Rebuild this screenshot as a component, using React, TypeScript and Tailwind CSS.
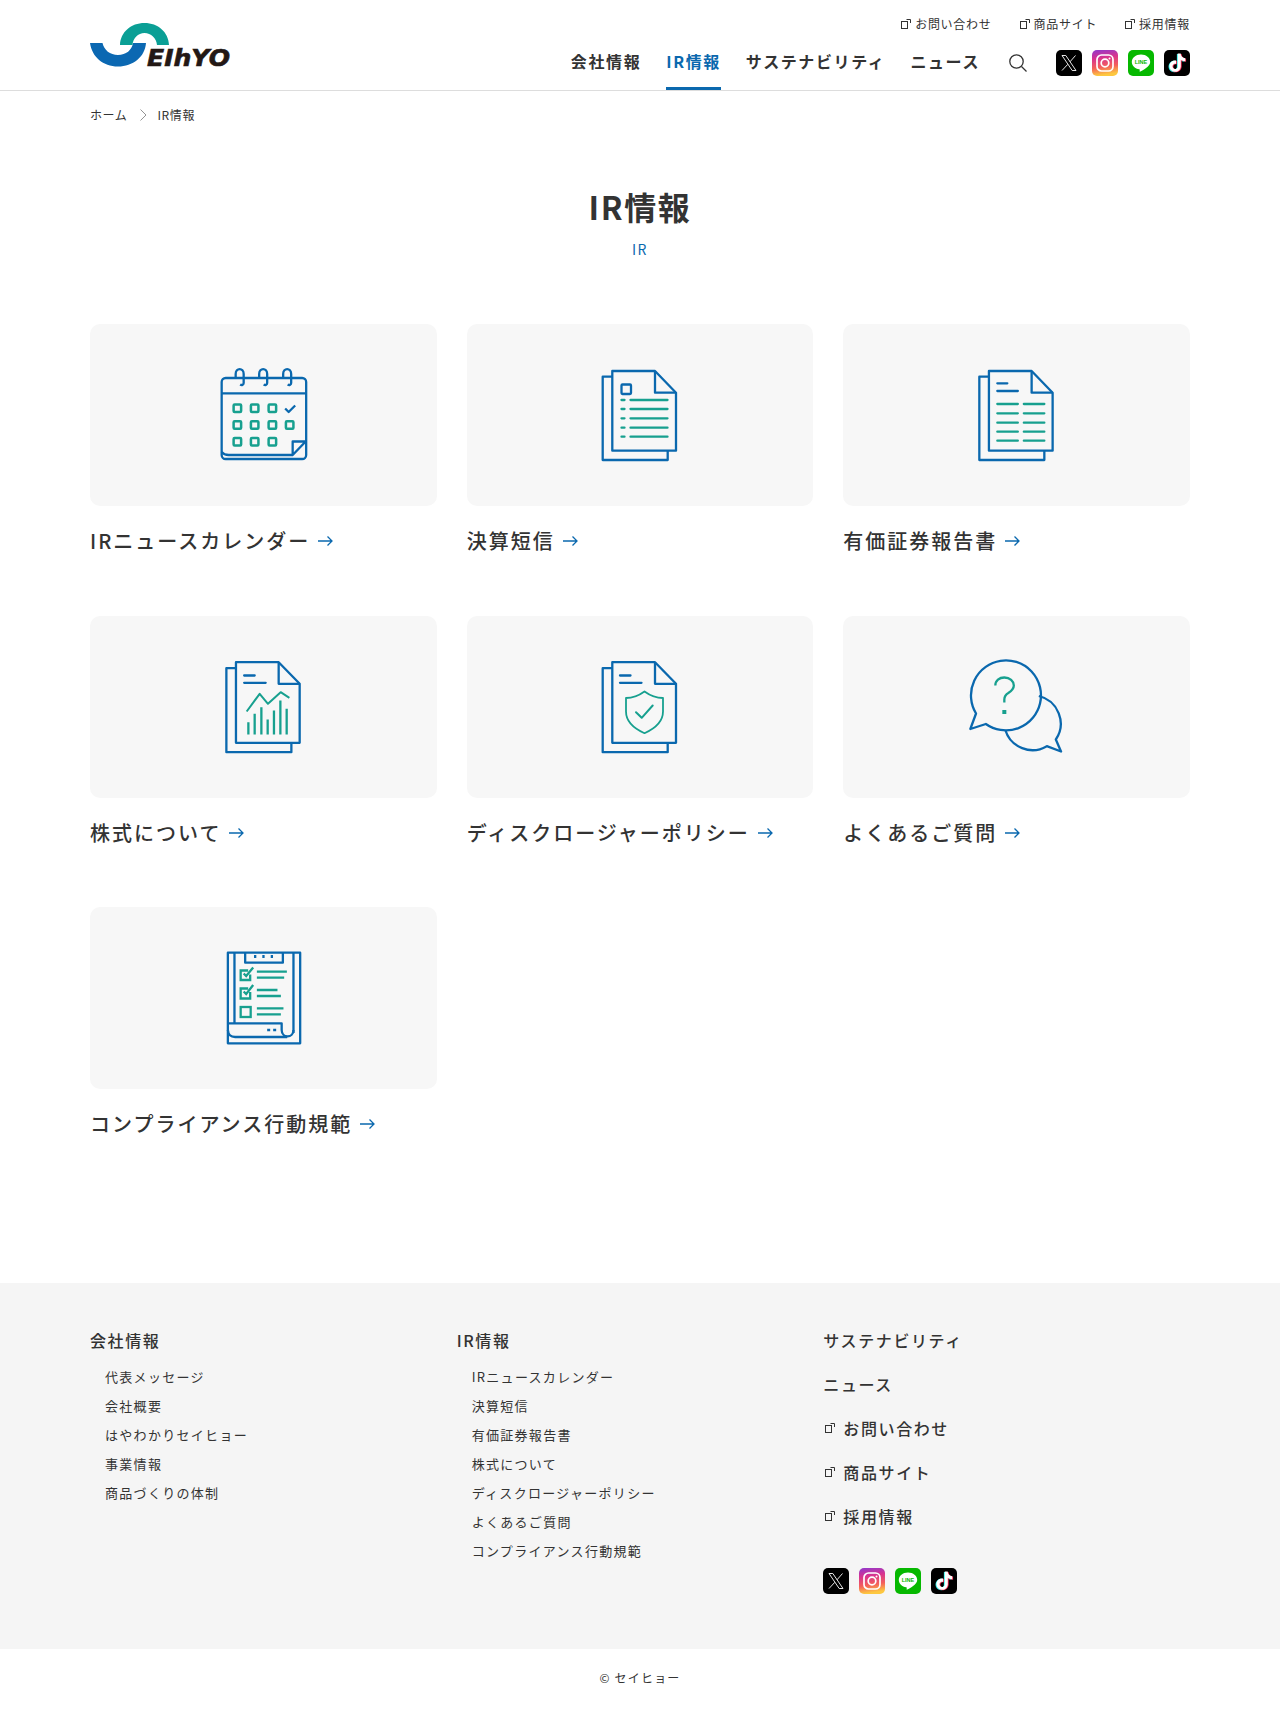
import type { ReactNode } from 'react'

const BLUE = '#0a68ae'
const TEAL = '#17a08f'

const TIKTOK = 'M12.525.02c1.31-.02 2.61-.01 3.91-.02.08 1.53.63 3.09 1.75 4.17 1.12 1.11 2.7 1.62 4.24 1.79v4.03c-1.44-.05-2.89-.35-4.2-.97-.57-.26-1.1-.59-1.62-.93-.01 2.92.01 5.84-.02 8.75-.08 1.4-.54 2.79-1.35 3.94-1.31 1.92-3.58 3.17-5.91 3.21-1.43.08-2.86-.31-4.08-1.03-2.02-1.19-3.44-3.37-3.65-5.71-.02-.5-.03-1-.01-1.49.18-1.9 1.12-3.72 2.58-4.96 1.66-1.44 3.98-2.13 6.15-1.72.02 1.48-.04 2.96-.04 4.44-.99-.32-2.15-.23-3.02.37-.63.41-1.11 1.04-1.36 1.75-.21.51-.15 1.07-.14 1.61.24 1.64 1.82 3.02 3.5 2.87 1.12-.01 2.19-.66 2.77-1.61.19-.33.4-.67.41-1.06.1-1.79.06-3.57.07-5.36.01-4.03-.01-8.05.02-12.07z'

function Logo() {
  return (
    <svg width="144" height="52" viewBox="90 23 144 52" className="block">
      <path d="M90 43H102.500C104 50 110 55 118 55C126 55 132 50 133 43H146C145 57 133 66.500 118 66.500C103 66.500 92 57 90 43Z" fill="#0b68b2" />
      <path d="M120 45C120.500 32 131 23 144.500 23C158 23 168.500 32 169 45H157C156.500 38 151 33 144.500 33C138 33 133 38 132.500 45Z" fill="#0a9f95" />
      <text x="147" y="66" fontFamily="'DejaVu Sans', sans-serif" fontWeight="700" fontStyle="italic" fontSize="23" fill="#231815" stroke="#231815" strokeWidth="0.600" textLength="83" lengthAdjust="spacingAndGlyphs">EIhYO</text>
    </svg>
  )
}

function ExternalIcon({ className }: { className?: string }) {
  return (
    <svg viewBox="0 0 10 10" fill="none" stroke="#333" strokeWidth="1" className={className}>
      <rect x="0.5" y="2.500" width="6" height="7" />
      <path d="M5.500 0.500H9.500V4" />
    </svg>
  )
}

function SocialIcons() {
  return (
    <div className="flex gap-[10px]">
      <svg viewBox="0 0 26 26" className="h-[26px] w-[26px]">
        <rect width="26" height="26" rx="5" fill="#000" />
        <g fill="none" stroke="#fff" strokeWidth="0.900">
          <path d="M6 5.500H9.800L20 20.500H16.200Z" />
          <path d="M19.500 5.500L14 11.800M11.800 14.300L6 20.500" />
        </g>
      </svg>
      <svg viewBox="0 0 26 26" className="h-[26px] w-[26px]">
        <defs>
          <linearGradient id="ig" x1="0" y1="0" x2="0.15" y2="1">
            <stop offset="0" stopColor="#8f39ce" />
            <stop offset="0.35" stopColor="#d8338f" />
            <stop offset="0.7" stopColor="#f4605a" />
            <stop offset="1" stopColor="#fdc83f" />
          </linearGradient>
        </defs>
        <rect width="26" height="26" rx="5" fill="url(#ig)" />
        <rect x="5" y="5" width="16" height="16" rx="4.500" fill="none" stroke="#fff" strokeWidth="1.700" />
        <circle cx="13" cy="13" r="3.800" fill="none" stroke="#fff" strokeWidth="1.700" />
        <circle cx="17.500" cy="8.500" r="1" fill="#fff" />
      </svg>
      <svg viewBox="0 0 26 26" className="h-[26px] w-[26px]">
        <rect width="26" height="26" rx="5" fill="#06b800" />
        <path d="M13 4.500C7.800 4.500 3.800 7.800 3.800 12C3.800 15.700 7 18.600 11.300 19.300C12 19.500 11.700 20.600 11.600 21.300C11.600 21.700 11.900 21.900 12.400 21.600C14.500 20.500 22.200 16.500 22.200 12C22.200 7.800 18.200 4.500 13 4.500Z" fill="#fff" />
        <text x="13" y="14" textAnchor="middle" fontFamily="'Liberation Sans', sans-serif" fontWeight="700" fontSize="5.500" fill="#06b800">LINE</text>
      </svg>
      <svg viewBox="0 0 26 26" className="h-[26px] w-[26px]">
        <rect width="26" height="26" rx="5" fill="#000" />
        <g transform="translate(4.200 3.600) scale(0.76)">
          <path transform="translate(-1.100 0.600)" fill="#25f4ee" d={TIKTOK} />
          <path transform="translate(1.100 0.600)" fill="#fe2c55" d={TIKTOK} />
          <path fill="#fff" d={TIKTOK} />
        </g>
      </svg>
    </div>
  )
}

// coordinates below were read off crops of each card, so the viewBox offset recentres them
function Pict({ vb, children }: { vb: string; children: ReactNode }) {
  return (
    <svg width="140" height="120" viewBox={vb} fill="none" strokeWidth="2.300" strokeLinejoin="round">
      {children}
    </svg>
  )
}

// two stacked sheets with a folded corner
function Sheets({ dx = 0, top = 21, back = 26.7, bottom = 100.7, backBottom = 110, cut = 42.7 }) {
  const l = 42.3 + dx
  const r = 106 + dx
  const c = 85 + dx
  const bl = 32.7 + dx
  const br = 97.7 + dx
  return (
    <g stroke={BLUE}>
      <path d={`M${c} ${top}H${l}V${bottom}H${r}V${cut}Z`} />
      <path d={`M${c} ${top}V${cut}H${r}`} />
      <path d={`M${l} ${back}H${bl}V${backBottom}H${br}V${bottom}`} />
    </g>
  )
}

const CalendarIcon = () => (
  <Pict vb="3.330 5 140 120">
    <g stroke={BLUE}>
      <rect x="32" y="28" width="84.500" height="81" rx="4" />
      <path d="M32 43.300H116.500" />
      <path d="M46 28V24C46 17.500 54 17.500 54 24V33C54 35 52 35.500 50.500 34.500" />
      <path d="M69.500 28V24C69.500 17.500 77.500 17.500 77.500 24V33C77.500 35 75.500 35.500 74 34.500" />
      <path d="M93.500 28V24C93.500 17.500 101.500 17.500 101.500 24V33C101.500 35 99.500 35.500 98 34.500" />
      <path d="M32 102C34 104.500 36 105 39 105H103" />
      <path d="M103 105V91.500H116L103 105Z" />
      <path d="M95.500 58.500L99 62L105.500 55.500" />
    </g>
    <g stroke={TEAL} strokeWidth="2.500">
      {[47.7, 65, 82.7].map((x) => <rect key={x} x={x - 3.75} y="54.500" width="7.500" height="7.500" rx="1" />)}
      {[47.7, 65, 82.7, 100].map((x) => <rect key={x} x={x - 3.75} y="71.200" width="7.500" height="7.500" rx="1" />)}
      {[47.7, 65, 82.7].map((x) => <rect key={x} x={x - 3.75} y="88" width="7.500" height="7.500" rx="1" />)}
    </g>
  </Pict>
)

const ListDocIcon = () => (
  <Pict vb="0 5 140 120">
    <Sheets />
    <rect x="51.500" y="34.500" width="9.500" height="9.500" rx="1" stroke={BLUE} />
    <g stroke={TEAL} strokeLinecap="round">
      {[50, 59, 68.3, 77.7, 86.7].map((y) => <path key={y} d={`M51.500 ${y}H54.500M60.500 ${y}H97.500`} />)}
    </g>
  </Pict>
)

const TableDocIcon = () => (
  <Pict vb="1.670 5 140 120">
    <Sheets dx={1.3} />
    <path d="M52 33.300H62M52 41H72.500" stroke={BLUE} strokeLinecap="round" />
    <g stroke={TEAL} strokeLinecap="round">
      {[54, 63.3, 72.7, 81.7, 90.7].map((y) => <path key={y} d={`M52 ${y}H72.500M78.500 ${y}H99`} />)}
    </g>
  </Pict>
)

const ChartDocIcon = () => (
  <Pict vb="2.330 1.500 140 120">
    <Sheets dx={3} top={16.700} back={22.700} bottom={97.300} backBottom={106.700} cut={38.300} />
    <path d="M53.500 30H64M53.500 37.300H75" stroke={BLUE} strokeLinecap="round" />
    <g stroke={TEAL}>
      <path d="M56 66L69 48.300L77.300 58.300L90 46.700L98.700 52.300" strokeWidth="2" />
      <path d="M57.700 89V76.700M64 89V68.300M70.700 89V61.700M77 89V74M83.300 89V65M89.700 89V55M96 89V63.300" />
    </g>
  </Pict>
)

const ShieldDocIcon = () => (
  <Pict vb="0 1.500 140 120">
    <Sheets top={16.700} back={22.700} bottom={97.300} backBottom={106.700} cut={38.300} />
    <path d="M50 30H60.500M50 37.300H71.500" stroke={BLUE} strokeLinecap="round" />
    <g stroke={TEAL} strokeWidth="1.800" strokeLinecap="round">
      <path d="M74.500 46C80 50 87 52.500 93 52.500V66C93 76 85 83 74.500 87.700C64 83 56 76 56 66V52.500C62 52.500 69 50 74.500 46Z" />
      <path d="M66 66.700L71.700 72.300L82.700 60" strokeWidth="2" />
    </g>
  </Pict>
)

const FaqIcon = () => (
  <Pict vb="2.670 1.500 140 120">
    <path d="M31.700 68A35 35 0 1 1 41.500 78.500L26 83.500Z" stroke={BLUE} />
    <path d="M94.500 50.500A28.400 28.400 0 0 1 111.500 94L116.700 106L102.500 100.700A28.400 28.400 0 0 1 61 84.500" stroke={BLUE} />
    <path d="M51 40C51 35 55 32 60 32C65.500 32 69.500 35.500 69.500 40C69.500 43.500 67 45.500 64 47.500C61.500 49 60 51 60 54V57" stroke={TEAL} strokeWidth="2.300" />
    <rect x="58" y="64.500" width="4" height="4" fill={TEAL} />
  </Pict>
)

const ClipboardIcon = () => (
  <Pict vb="2.830 -2 140 120">
    <g stroke={BLUE}>
      <path d="M37.700 12.700H110V103.300H37.700Z" />
      <path d="M44.300 12.700V83.300M103.300 12.700V93" />
      <path d="M55 12.700V22.700H92.700V12.700" />
      <path d="M65 15V18M73.300 15V18M81.700 15V18" />
      <path d="M37.700 83.300H91.500V90C91.500 98.500 103.300 98.500 103.300 90" />
      <path d="M37.700 90C38 94.500 41 97 45 97H97" />
      <path d="M77 90H80M83 90H86" />
    </g>
    <g stroke={TEAL} strokeLinejoin="miter">
      <path d="M60 34.500V40H50.500V30.500H58" />
      <path d="M53.500 33.500L56 36L63 27.500" />
      <path d="M60 52V58.500H50.500V48.500H58" />
      <path d="M53.500 51.500L56 54L63 45" />
      <rect x="50.500" y="67" width="10" height="10" />
      <path d="M66.700 31.700H96.700M66.700 37.700H94M66.700 50H87.300M66.700 56H90.700M66.700 68.300H93.300M66.700 74.300H90.700" />
    </g>
  </Pict>
)

const cards = [
  { label: 'IRニュースカレンダー', icon: CalendarIcon },
  { label: '決算短信', icon: ListDocIcon },
  { label: '有価証券報告書', icon: TableDocIcon },
  { label: '株式について', icon: ChartDocIcon },
  { label: 'ディスクロージャーポリシー', icon: ShieldDocIcon },
  { label: 'よくあるご質問', icon: FaqIcon },
  { label: 'コンプライアンス行動規範', icon: ClipboardIcon },
]

const topLinks = ['お問い合わせ', '商品サイト', '採用情報']
const companyLinks = ['代表メッセージ', '会社概要', 'はやわかりセイヒョー', '事業情報', '商品づくりの体制']
const irLinks = ['IRニュースカレンダー', '決算短信', '有価証券報告書', '株式について', 'ディスクロージャーポリシー', 'よくあるご質問', 'コンプライアンス行動規範']

function FooterColumn({ title, links }: { title: string; links: string[] }) {
  return (
    <div>
      <p className="text-[16px] leading-[24px] font-medium tracking-[0.1em]">{title}</p>
      <ul className="mt-[10px] pl-[15px]">
        {links.map((l) => (
          <li key={l} className="text-[13px] leading-[29px] tracking-[0.1em]">{l}</li>
        ))}
      </ul>
    </div>
  )
}

export default function App() {
  return (
    <div className="font-['Noto_Sans_CJK_JP','Noto_Sans',sans-serif] text-[#333] bg-white min-h-[1711px]">
      <header className="h-[91px] border-b border-[#ddd] px-[90px] flex justify-between">
        <a className="block mt-[23px]"><Logo /></a>
        <div className="flex flex-col items-end">
          <ul className="flex gap-[28px] mt-[15px] h-[18px] text-[12px] leading-[18px] tracking-[0.06em]">
            {topLinks.map((t) => (
              <li key={t} className="flex items-center gap-[4px]">
                <ExternalIcon className="w-[10px] h-[10px]" />
                {t}
              </li>
            ))}
          </ul>
          <div className="flex items-stretch h-[57px]">
            <nav className="flex gap-[25px] text-[16px] font-bold tracking-[0.1em]">
              <a className="flex items-center pt-[1px] border-b-[3px] border-transparent">会社情報</a>
              <a className="flex items-center pt-[1px] border-b-[3px] border-[#0a68ae] text-[#0a68ae]">IR情報</a>
              <a className="flex items-center pt-[1px] border-b-[3px] border-transparent">サステナビリティ</a>
              <a className="flex items-center pt-[1px] border-b-[3px] border-transparent">ニュース</a>
            </nav>
            <div className="flex items-center pt-[3px] ml-[29px] mr-[29px]">
              <svg viewBox="0 0 18 18" fill="none" stroke="#333" strokeWidth="1.300" className="w-[18px] h-[18px]">
                <circle cx="7.500" cy="7.500" r="6.700" />
                <path d="M12.500 12.500L17.500 17.500" />
              </svg>
            </div>
            <div className="flex items-center pt-[3px]"><SocialIcons /></div>
          </div>
        </div>
      </header>

      <div className="px-[90px] pt-[15px] flex items-center text-[12px] leading-[18px] tracking-[0.05em]">
        <span>ホーム</span>
        <svg viewBox="0 0 7 12" fill="none" stroke="#888" strokeWidth="0.900" className="w-[7px] h-[12px] ml-[13px] mr-[10px]">
          <path d="M0.500 0.500L6 6L0.500 11.500" />
        </svg>
        <span>IR情報</span>
      </div>

      <div className="text-center mt-[58px]">
        <h1 className="text-[32px] leading-[48px] font-bold tracking-[0.05em]">IR情報</h1>
        <p className="mt-[9px] text-[14px] leading-[21px] text-[#0a68ae] tracking-[0.1em]">IR</p>
      </div>

      <main className="px-[90px] mt-[64px] grid grid-cols-3 gap-x-[30px] gap-y-[30px]">
        {cards.map((c) => (
          <a key={c.label} className="block h-[261.500px]">
            <div className="h-[182px] rounded-[10px] bg-[#f7f7f7] flex items-center justify-center">
              <c.icon />
            </div>
            <p className="mt-[20px] flex items-center text-[20px] leading-[30px] font-medium tracking-[0.1em]">
              {c.label}
              <svg viewBox="0 0 15 10" fill="none" stroke={BLUE} strokeWidth="1.300" className="w-[15px] h-[10px] ml-[8px]">
                <path d="M0 5H14M9.500 0.500L14 5L9.500 9.500" />
              </svg>
            </p>
          </a>
        ))}
      </main>

      <footer className="mt-[114px]">
        <div className="h-[366px] bg-[#f5f5f5] px-[90px] pt-[45px] grid grid-cols-3">
          <FooterColumn title="会社情報" links={companyLinks} />
          <FooterColumn title="IR情報" links={irLinks} />
          <div>
            <div className="flex flex-col gap-[20px] text-[16px] leading-[24px] font-medium tracking-[0.1em]">
              <p>サステナビリティ</p>
              <p>ニュース</p>
              {topLinks.map((t) => (
                <p key={t} className="flex items-center gap-[8px] pl-[2px]">
                  <ExternalIcon className="w-[10px] h-[10px]" />
                  {t}
                </p>
              ))}
            </div>
            <div className="mt-[40px]"><SocialIcons /></div>
          </div>
        </div>
        <p className="h-[59px] flex items-center justify-center text-[12px] tracking-[0.1em]">© セイヒョー</p>
      </footer>
    </div>
  )
}
